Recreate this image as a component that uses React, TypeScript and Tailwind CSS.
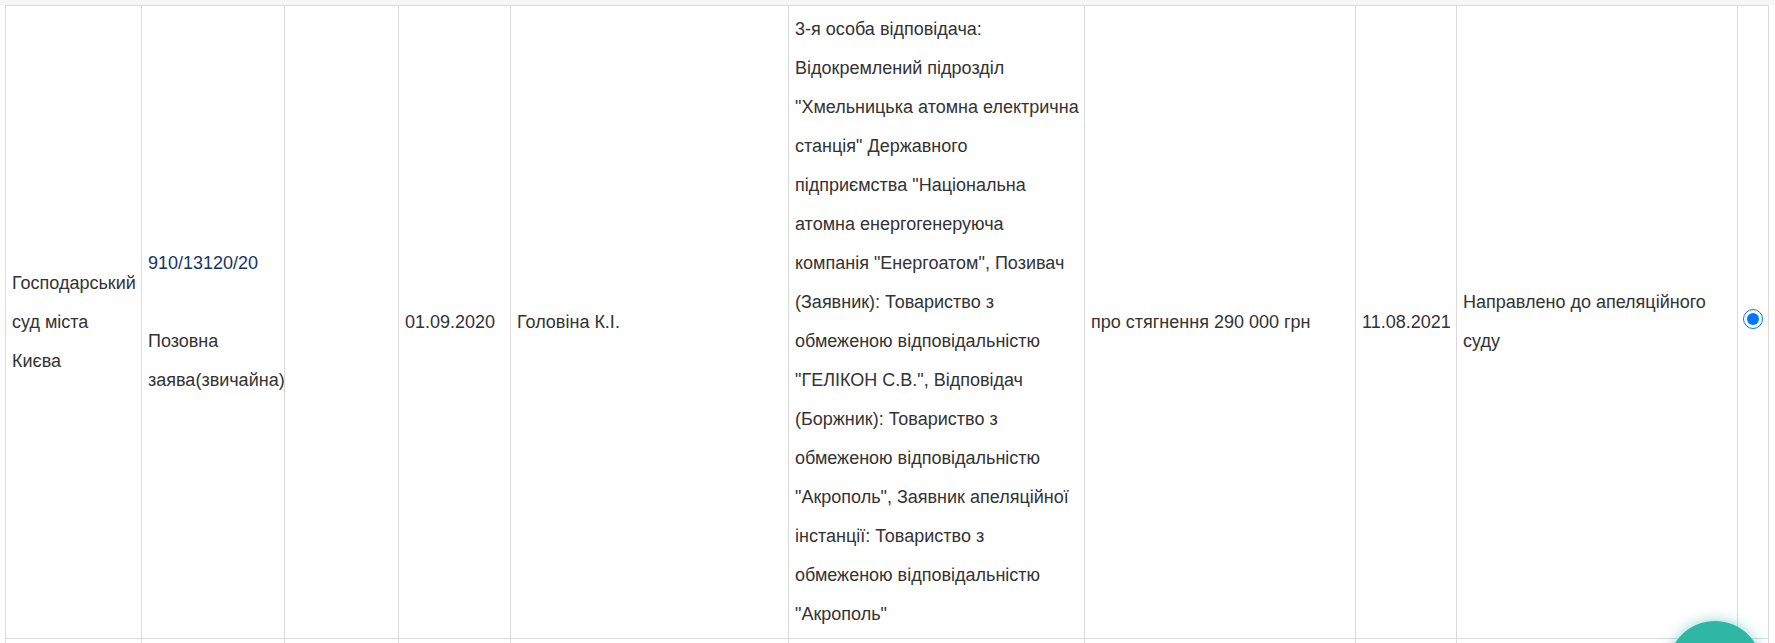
import React from "react";

const cols = [136, 143, 114, 112, 278, 296, 271, 101, 281, 31];

const cell =
  "border border-[#dadada] px-[6px] py-[4px] align-middle text-left font-normal";

const partyLines = [
  "3-я особа відповідача:",
  "Відокремлений підрозділ",
  '"Хмельницька атомна електрична',
  'станція" Державного',
  'підприємства "Національна',
  "атомна енергогенеруюча",
  'компанія "Енергоатом", Позивач',
  "(Заявник): Товариство з",
  "обмеженою відповідальністю",
  '"ГЕЛІКОН С.В.", Відповідач',
  "(Боржник): Товариство з",
  "обмеженою відповідальністю",
  '"Акрополь", Заявник апеляційної',
  "інстанції: Товариство з",
  "обмеженою відповідальністю",
  '"Акрополь"',
];

const App: React.FC = () => {
  return (
    <div
      className="relative h-[643px] w-full overflow-hidden bg-white text-[18px] leading-[39px] text-[#333333]"
      style={{ fontFamily: '"Liberation Sans", Arial, sans-serif' }}
    >
      <div className="h-[5px] bg-[#f6f6f6]" />
      <div className="pl-[5px]">
        <table className="table-fixed border-collapse" style={{ width: 1763 }}>
          <colgroup>
            {cols.map((w, i) => (
              <col key={i} style={{ width: w }} />
            ))}
          </colgroup>
          <tbody>
            <tr>
              <td className={cell}>Господарський суд міста Києва</td>
              <td className={cell}>
                <a href="#" className="text-[#12365f]">
                  910/13120/20
                </a>
                <br />
                <br />
                Позовна заява(звичайна)
              </td>
              <td className={cell}></td>
              <td className={cell}>01.09.2020</td>
              <td className={cell}>Головіна К.І.</td>
              <td className={`${cell} whitespace-nowrap`}>
                {partyLines.map((line, i) => (
                  <React.Fragment key={i}>
                    {line}
                    {i < partyLines.length - 1 && <br />}
                  </React.Fragment>
                ))}
              </td>
              <td className={cell}>про стягнення 290 000 грн</td>
              <td className={cell}>11.08.2021</td>
              <td className={cell}>Направлено до апеляційного суду</td>
              <td className="border border-[#dadada] px-0 py-[4px] text-center align-middle">
                <input
                  type="radio"
                  checked
                  readOnly
                  className="relative top-[-4px] m-0 h-[20px] w-[20px] accent-[#0075ff] align-middle"
                />
              </td>
            </tr>
            <tr>
              {cols.map((_, i) => (
                <td key={i} className={`${cell} h-[60px]`}></td>
              ))}
            </tr>
          </tbody>
        </table>
      </div>
      <div className="absolute left-[1668px] top-[621px] h-[94px] w-[94px] rounded-full bg-[#30b7a4] shadow-[0_0_14px_rgba(48,183,164,0.55)]" />
    </div>
  );
};

export default App;
